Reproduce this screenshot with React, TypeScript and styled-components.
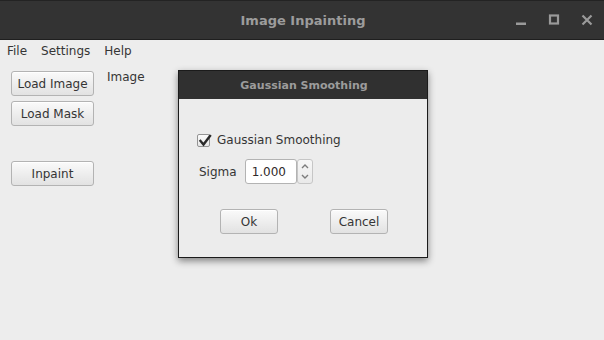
import React from 'react';
import styled, { createGlobalStyle } from 'styled-components';

const GlobalStyle = createGlobalStyle`
  html, body {
    margin: 0;
    padding: 0;
    background: #ededed;
  }
  body {
    font-family: 'DejaVu Sans', 'Liberation Sans', sans-serif;
    font-size: 12px;
    color: #353535;
  }
`;

const Window = styled.div`
  position: relative;
  width: 604px;
  height: 340px;
  overflow: hidden;
  background: #ededed;
`;

const TitleBar = styled.header`
  box-sizing: border-box;
  height: 40px;
  display: grid;
  grid-template-columns: 1fr auto 1fr;
  align-items: center;
  background: #333333;
  border-top: 1px solid #232323;
  border-bottom: 1px solid #1f1f1f;
`;

const Title = styled.div`
  grid-column: 2;
  padding-left: 2px;
  font-size: 13px;
  font-weight: bold;
  color: #9c9c9c;
`;

const Controls = styled.div`
  grid-column: 3;
  justify-self: end;
  display: flex;
  padding-right: 1px;
`;

const ControlButton = styled.span`
  width: 33px;
  height: 38px;
  display: flex;
  align-items: center;
  justify-content: center;
  color: #9a9a9a;
`;

const MenuBar = styled.nav`
  box-sizing: border-box;
  height: 20px;
  display: flex;
  align-items: center;
  padding-top: 2px;
`;

const MenuItem = styled.span`
  padding: 0 7px;
  line-height: 14px;
`;

const Content = styled.main`
  display: flex;
  align-items: flex-start;
  gap: 13px;
  padding: 11px 0 0 11px;
`;

const ButtonColumn = styled.div`
  display: flex;
  flex-direction: column;
  gap: 5px;
`;

const PushButton = styled.button<{ $width?: number; $gapBefore?: number }>`
  box-sizing: border-box;
  width: ${(p) => p.$width ?? 83}px;
  height: 25px;
  margin-top: ${(p) => p.$gapBefore ?? 0}px;
  padding: 0;
  font-family: inherit;
  font-size: 12px;
  color: #353535;
  background: linear-gradient(#fafafa, #e2e2e2);
  border: 1px solid #b3b3b3;
  border-radius: 3px;
  box-shadow: inset 0 1px 0 #ffffff;
`;

const ImageLabel = styled.span`
  margin-top: -1px;
  line-height: 14px;
`;

const Dialog = styled.section`
  position: absolute;
  left: 178px;
  top: 70px;
  box-sizing: border-box;
  width: 250px;
  height: 188px;
  border: 1px solid #1b1b1b;
  background: #ececec;
  box-shadow: 0 3px 7px rgba(0, 0, 0, 0.45);
  display: flex;
  flex-direction: column;
`;

const DialogHeader = styled.div`
  height: 28px;
  display: flex;
  align-items: center;
  justify-content: center;
  padding-left: 2px;
  background: #303030;
  font-size: 11px;
  font-weight: bold;
  color: #9c9c9c;
`;

const DialogBody = styled.div`
  display: flex;
  flex-direction: column;
  padding: 34px 0 0 18px;
`;

const CheckRow = styled.label`
  display: flex;
  align-items: center;
  gap: 7px;
  height: 14px;
  line-height: 14px;
`;

const CheckBox = styled.span`
  position: relative;
  box-sizing: border-box;
  width: 13px;
  height: 13px;
  border: 1px solid #949494;
  border-radius: 2px;
  background: linear-gradient(#fbfbfb, #e6e6e6);
  svg {
    position: absolute;
    left: -1px;
    top: -3px;
  }
`;

const SpinRow = styled.div`
  display: flex;
  align-items: center;
  margin-top: 12px;
  padding-left: 2px;
  gap: 8px;
`;

const SpinBox = styled.div`
  display: flex;
  height: 25px;
`;

const SpinInput = styled.div`
  box-sizing: border-box;
  width: 52px;
  height: 25px;
  padding-left: 6px;
  display: flex;
  align-items: center;
  background: #ffffff;
  border: 1px solid #b3b3b3;
  border-radius: 3px;
  color: #302a2a;
`;

const SpinArrows = styled.div`
  box-sizing: border-box;
  width: 16px;
  height: 25px;
  display: flex;
  flex-direction: column;
  align-items: center;
  justify-content: space-around;
  padding: 2px 0;
  background: linear-gradient(#f7f7f7, #e9e9e9);
  border: 1px solid #c6c6c6;
  border-radius: 3px;
`;

const ButtonRow = styled.div`
  display: flex;
  gap: 52px;
  margin-top: 25px;
  padding-left: 23px;
`;

const MinIcon = () => (
  <svg width="12" height="12" viewBox="0 0 12 12">
    <rect x="1" y="8.5" width="10" height="2.5" fill="currentColor" />
  </svg>
);

const MaxIcon = () => (
  <svg width="12" height="12" viewBox="0 0 12 12">
    <rect x="2" y="1.5" width="8" height="8" fill="none" stroke="currentColor" strokeWidth="2.2" />
  </svg>
);

const CloseIcon = () => (
  <svg width="12" height="12" viewBox="0 0 12 12">
    <path d="M1.5 1.5 L10.5 10.5 M10.5 1.5 L1.5 10.5" stroke="currentColor" strokeWidth="2.2" />
  </svg>
);

const Chevron = ({ up }: { up?: boolean }) => (
  <svg width="8" height="5" viewBox="0 0 8 5">
    <path
      d={up ? 'M1 4 L4 1 L7 4' : 'M1 1 L4 4 L7 1'}
      fill="none"
      stroke="#7c7c7c"
      strokeWidth="1.4"
    />
  </svg>
);

export default function App(): React.ReactElement {
  return (
    <Window>
      <GlobalStyle />
      <TitleBar>
        <Title>Image Inpainting</Title>
        <Controls>
          <ControlButton>
            <MinIcon />
          </ControlButton>
          <ControlButton>
            <MaxIcon />
          </ControlButton>
          <ControlButton>
            <CloseIcon />
          </ControlButton>
        </Controls>
      </TitleBar>
      <MenuBar>
        <MenuItem>File</MenuItem>
        <MenuItem>Settings</MenuItem>
        <MenuItem>Help</MenuItem>
      </MenuBar>
      <Content>
        <ButtonColumn>
          <PushButton>Load Image</PushButton>
          <PushButton>Load Mask</PushButton>
          <PushButton $gapBefore={30}>Inpaint</PushButton>
        </ButtonColumn>
        <ImageLabel>Image</ImageLabel>
      </Content>

      <Dialog>
        <DialogHeader>Gaussian Smoothing</DialogHeader>
        <DialogBody>
          <CheckRow>
            <CheckBox>
              <svg width="16" height="16" viewBox="0 0 16 16">
                <path
                  d="M3.5 9 L6.5 12.5 L13 4"
                  fill="none"
                  stroke="#2a2a2a"
                  strokeWidth="2.4"
                  strokeLinecap="square"
                />
              </svg>
            </CheckBox>
            Gaussian Smoothing
          </CheckRow>
          <SpinRow>
            <span>Sigma</span>
            <SpinBox>
              <SpinInput>1.000</SpinInput>
              <SpinArrows>
                <Chevron up />
                <Chevron />
              </SpinArrows>
            </SpinBox>
          </SpinRow>
          <ButtonRow>
            <PushButton $width={58}>Ok</PushButton>
            <PushButton $width={58}>Cancel</PushButton>
          </ButtonRow>
        </DialogBody>
      </Dialog>
    </Window>
  );
}
